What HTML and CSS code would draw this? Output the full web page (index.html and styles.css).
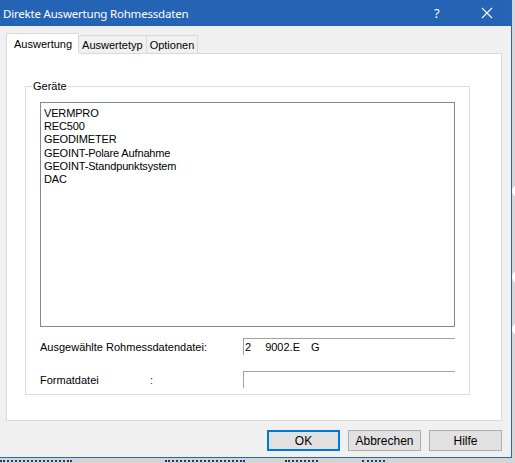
FILE: index.html
```html
<!DOCTYPE html>
<html lang="de">
<head>
  <meta charset="UTF-8">
  <title>Direkte Auswertung Rohmessdaten</title>
  <link rel="stylesheet" href="styles.css">
</head>
<body>
  <div class="screen">
    <div class="column">
      <div class="window">
        <div class="titlebar">
          <span class="title">Direkte Auswertung Rohmessdaten</span>
          <span class="help">?</span>
          <span class="close">
            <svg width="12" height="12" viewBox="0 0 12 12">
              <path d="M1 1 L11 11 M11 1 L1 11" stroke="#fff" stroke-width="1.1" fill="none"/>
            </svg>
          </span>
        </div>
        <div class="client">
          <div class="tabs">
            <div class="tab active">Auswertung</div>
            <div class="tab">Auswertetyp</div>
            <div class="tab">Optionen</div>
          </div>
          <div class="panel">
            <fieldset class="group">
              <legend>Geräte</legend>
              <div class="listbox">
                <div>VERMPRO</div>
                <div>REC500</div>
                <div>GEODIMETER</div>
                <div>GEOINT-Polare Aufnahme</div>
                <div>GEOINT-Standpunktsystem</div>
                <div>DAC</div>
              </div>
              <div class="row first">
                <span class="label">Ausgewählte Rohmessdatendatei:</span>
                <div class="field">2<span class="mask narrow"></span><span class="mask"></span>9002.E<span class="mask"></span>G</div>
              </div>
              <div class="row second">
                <span class="label short">Formatdatei</span>
                <span class="colon">:</span>
                <div class="field"></div>
              </div>
            </fieldset>
          </div>
          <div class="buttons">
            <button class="btn default">OK</button>
            <button class="btn">Abbrechen</button>
            <button class="btn">Hilfe</button>
          </div>
        </div>
      </div>
      <!-- tops of the window behind, peeking out under the dialog -->
      <div class="behind">
        <span class="frag w1"></span>
        <span class="frag w2"></span>
        <span class="frag w3"></span>
        <span class="frag w4"></span>
      </div>
    </div>
    <div class="edge">
      <span class="bump b1"></span>
      <span class="bump b2"></span>
      <span class="bump b3"></span>
    </div>
  </div>
</body>
</html>
```

FILE: styles.css
```css
body {
  margin: 0;
  padding: 0;
  background: #dadada;
  font-family: 'Liberation Sans', Arial, sans-serif;
  font-size: 11px;
  color: #000;
}

.screen {
  width: 515px;
  height: 463px;
  display: flex;
  overflow: hidden;
}

.column {
  width: 512px;
  display: flex;
  flex-direction: column;
}

.window {
  height: 458px;
  box-sizing: border-box;
  border-right: 1px solid #2a66b8;
  border-bottom: 1px solid #2a66b8;
  display: flex;
  flex-direction: column;
}

.titlebar {
  height: 26px;
  background: #2563b5;
  color: #fff;
  display: flex;
  align-items: center;
  padding-left: 3px;
  font-family: 'Noto Sans', sans-serif;
  font-size: 11.5px;
}

.title {
  flex: 1;
  letter-spacing: -0.2px;
}

.help {
  width: 14px;
  font-size: 13px;
  margin-right: 33px;
}

.close {
  width: 12px;
  height: 12px;
  margin-right: 18px;
  display: flex;
}

.client {
  flex: 1;
  background: #f0f0f0;
  padding: 7px 9px 0 6px;
  display: flex;
  flex-direction: column;
}

.tabs {
  display: flex;
  align-items: flex-end;
  height: 20px;
  position: relative;
  z-index: 1;
}

.tab {
  height: 18px;
  box-sizing: border-box;
  border: 1px solid #d9d9d9;
  border-bottom: none;
  background: #f0f0f0;
  padding: 3px 3px 0 3px;
  margin-left: -1px;
}

.tab.active {
  height: 21px;
  margin-bottom: -1px;
  margin-left: 0;
  background: #fff;
  padding: 4px 7px 0 7px;
  border-right: none;
}

.panel {
  height: 368px;
  box-sizing: border-box;
  background: #fff;
  border: 1px solid #d9d9d9;
  padding: 26px 31px 0 18px;
}

.group {
  margin: 0;
  height: 315px;
  box-sizing: border-box;
  border: 1px solid #dcdcdc;
  padding: 10px 14px 0 14px;
}

.group legend {
  padding: 0 1px;
  margin-left: -8px;
}

.listbox {
  height: 225px;
  box-sizing: border-box;
  border: 1px solid #828790;
  padding: 4px 3px;
  line-height: 13.2px;
  font-size: 11px;
  letter-spacing: -0.15px;
}

.row {
  display: flex;
  align-items: center;
  height: 17px;
}

.row.first {
  margin-top: 11px;
}

.row.second {
  margin-top: 16px;
}

.label {
  width: 203px;
}

.label.short {
  width: 110px;
}

.colon {
  width: 93px;
  color: #800040;
}

.field {
  flex: 1;
  height: 17px;
  box-sizing: border-box;
  border-top: 1px solid #a0a0a0;
  border-left: 1px solid #a0a0a0;
  padding: 2px 0 0 1px;
  font-size: 11px;
  white-space: nowrap;
}

.mask {
  display: inline-block;
  width: 11px;
}

.mask.narrow {
  width: 3px;
}

.buttons {
  display: flex;
  justify-content: flex-end;
  gap: 8px;
  margin-top: 9px;
}

.btn {
  width: 73px;
  height: 21px;
  box-sizing: border-box;
  background: #e1e1e1;
  border: 1px solid #adadad;
  font-family: 'Liberation Sans', Arial, sans-serif;
  font-size: 12px;
  color: #000;
  padding: 0;
}

.btn.default {
  border: 2px solid #0078d7;
}

.behind {
  height: 5px;
  background: #d4d4d4;
  display: flex;
  align-items: flex-start;
  padding-top: 2px;
  box-sizing: border-box;
}

.frag {
  height: 2px;
  border-top: 2px dotted #1a3c6e;
  box-sizing: border-box;
}

.w1 { width: 72px; }
.w2 { width: 80px; margin-left: 93px; }
.w3 { width: 33px; margin-left: 40px; }
.w4 { width: 23px; margin-left: 44px; }

.edge {
  flex: 1;
  position: relative;
  background: #d6d6d6;
}

.bump {
  position: absolute;
  left: 0;
  width: 12px;
  height: 12px;
  border-radius: 50%;
  background: #fff;
}

.b1 { top: 185px; }
.b2 { top: 271px; }
.b3 { top: 323px; }
```
